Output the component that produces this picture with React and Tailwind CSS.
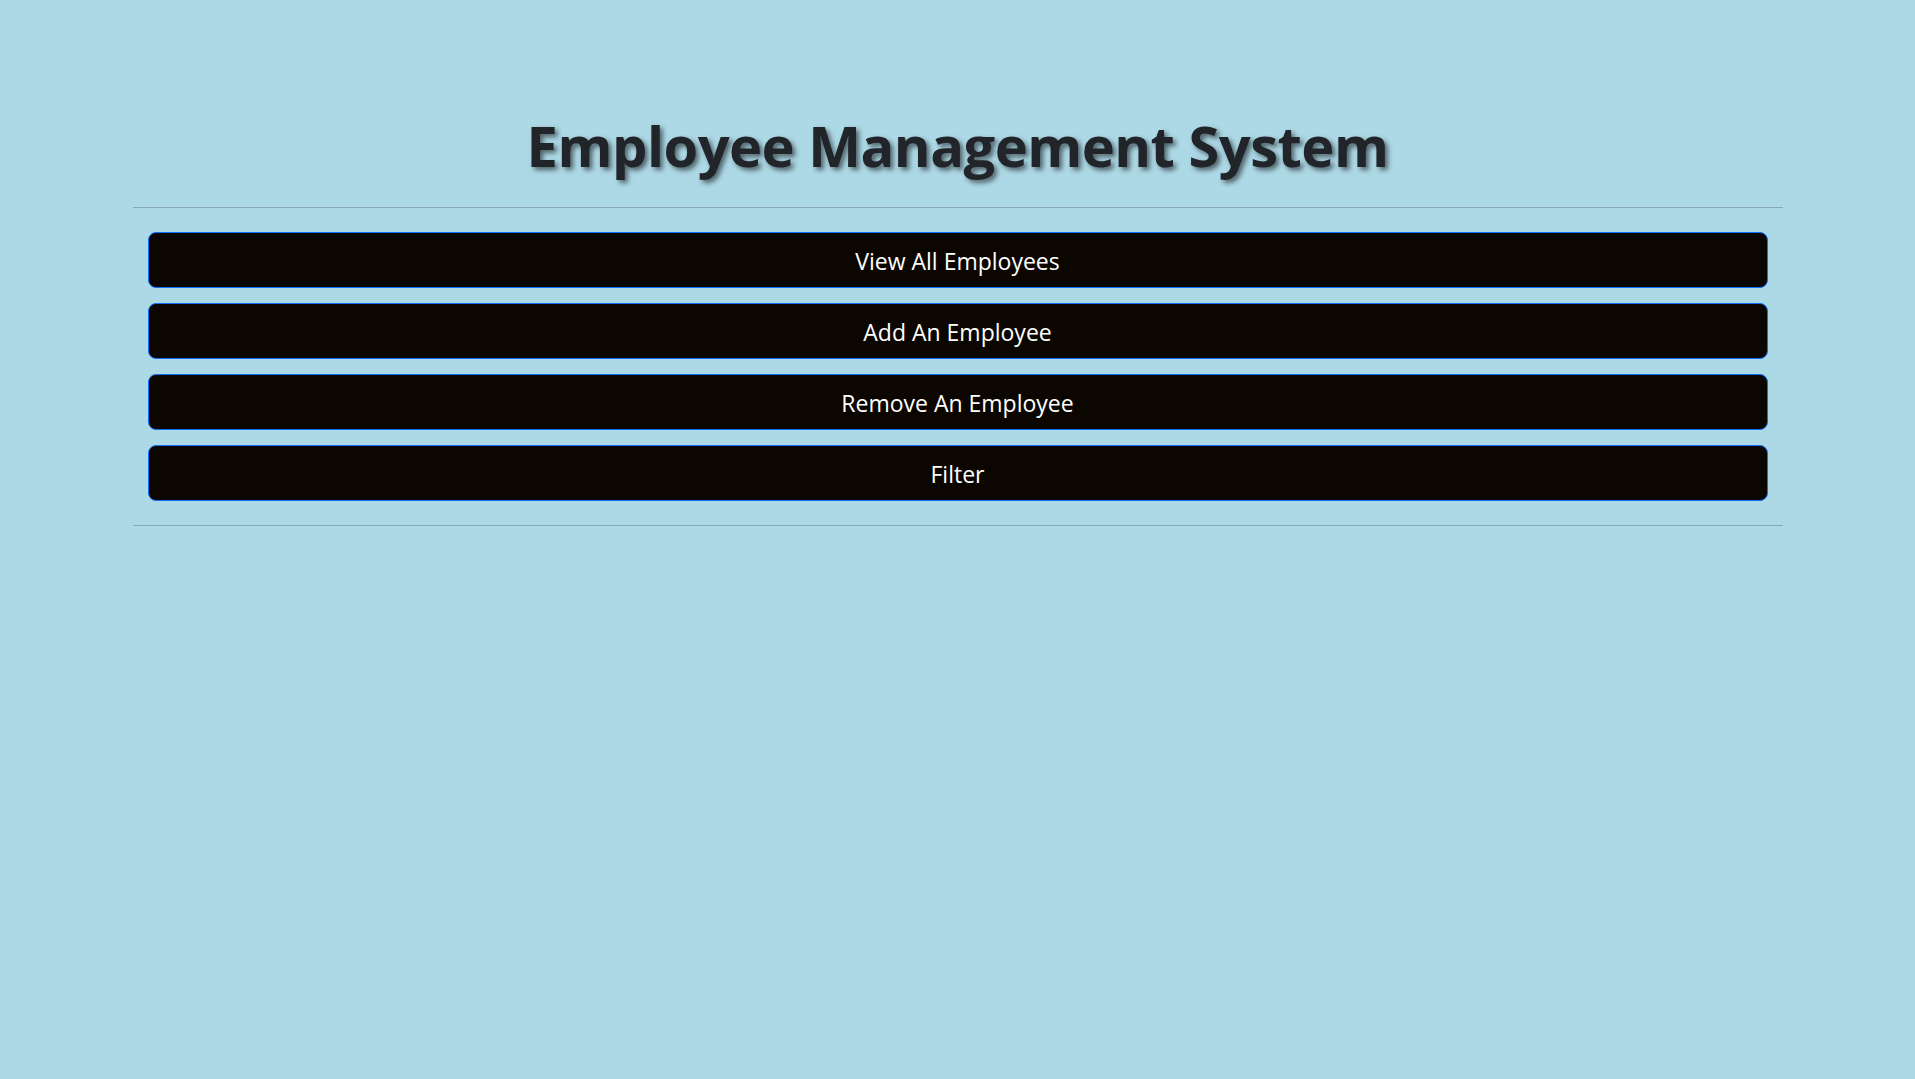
const options = [
  "View All Employees",
  "Add An Employee",
  "Remove An Employee",
  "Filter",
];

const App = () => {
  return (
    <div className="min-h-screen w-full bg-[#add8e6] font-['Open_Sans','Noto_Sans',sans-serif]">
      <div className="mx-auto w-[1650px] pt-[109px]">
        <h1 className="text-center text-[56px] leading-[72px] font-bold tracking-[-0.5px] text-[#212529] [text-shadow:3px_3px_5px_rgba(0,0,0,0.55)]">
          Employee Management System
        </h1>
        <hr className="mt-[26px] border-t border-[#8aa9b4]" />
        <div className="flex flex-col gap-[15px] px-[15px] py-[24px]">
          {options.map((opt) => (
            <button
              key={opt}
              className="h-[56px] w-full rounded-[8px] border border-[#0d6efd] bg-[#0b0700] pt-[2px] text-[23px] text-white"
            >
              {opt}
            </button>
          ))}
        </div>
        <hr className="border-t border-[#8aa9b4]" />
      </div>
    </div>
  );
};

export default App;
